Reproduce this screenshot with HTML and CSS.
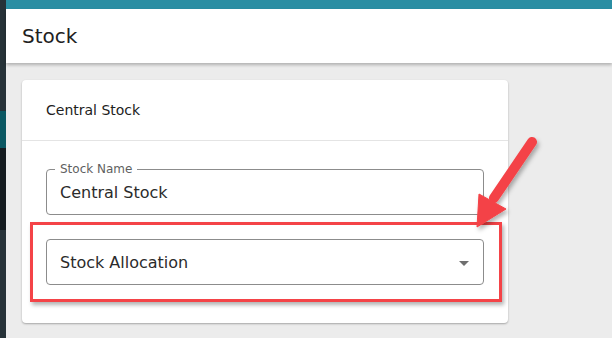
FILE: index.html
```html
<!DOCTYPE html>
<html>
<head>
  <title>Stock</title>
  <link rel="stylesheet" href="styles.css">
</head>
<body>
  <div class="app">
    <div class="sidebar">
      <div class="side-top"></div>
      <div class="side-active"></div>
      <div class="side-dark"></div>
      <div class="side-rest"></div>
    </div>

    <div class="main">
      <div class="topbar"></div>
      <div class="page-header">Stock</div>

      <div class="content">
        <div class="card">
          <div class="card-header">Central Stock</div>
          <div class="card-body">
            <div class="field">
              <span class="field-label">Stock Name</span>
              <div class="field-value">Central Stock</div>
            </div>

            <div class="field select">
              <div class="field-value">Stock Allocation</div>
              <span class="caret"></span>
              <div class="highlight"></div>
            </div>
          </div>
        </div>
      </div>
    </div>
  </div>

  <svg class="pointer" width="612" height="338" viewBox="0 0 612 338">
    <defs>
      <filter id="shade" x="-20%" y="-20%" width="160%" height="160%">
        <feDropShadow dx="2" dy="3" stdDeviation="2" flood-color="#000" flood-opacity="0.3"/>
      </filter>
    </defs>
    <g filter="url(#shade)" fill="#f44347" stroke="#f44347">
      <line x1="532" y1="142" x2="494" y2="198" stroke-width="10" stroke-linecap="round"/>
      <polygon points="477,227 479,194 506,209" stroke-width="1" stroke-linejoin="round"/>
    </g>
  </svg>
</body>
</html>
```

FILE: styles.css
```css
body {
  margin: 0;
  font-family: "DejaVu Sans", sans-serif;
  background-color: #ececec;
  color: #212121;
}

.app {
  display: flex;
  height: 338px;
  overflow: hidden;
}

.sidebar {
  width: 6px;
  display: flex;
  flex-direction: column;
  background-color: #263238;
}

.side-top {
  height: 111px;
}

.side-active {
  height: 37px;
  background-color: #0b5863;
}

.side-dark {
  height: 82px;
  background-color: #151b20;
}

.side-rest {
  flex: 1;
}

.main {
  flex: 1;
  display: flex;
  flex-direction: column;
}

.topbar {
  height: 9px;
  background-color: #2a8ea3;
}

.page-header {
  height: 54px;
  display: flex;
  align-items: center;
  padding-left: 16px;
  font-size: 20px;
  background-color: #fff;
  box-shadow: 0 2px 3px rgba(0, 0, 0, 0.25);
  position: relative;
}

.content {
  padding: 17px 0 0 16px;
}

.card {
  width: 486px;
  background-color: #fff;
  border-radius: 4px;
  box-shadow: 0 1px 2px rgba(0, 0, 0, 0.3);
}

.card-header {
  height: 60px;
  display: flex;
  align-items: center;
  padding-left: 24px;
  font-size: 14px;
  border-bottom: 1px solid #e4e4e4;
}

.card-body {
  padding: 28px 24px 38px 24px;
  display: flex;
  flex-direction: column;
  gap: 24px;
}

.field {
  position: relative;
  height: 46px;
  box-sizing: border-box;
  border: 1px solid #8c8c8c;
  border-radius: 4px;
  padding: 0 13px;
  display: flex;
  align-items: center;
}

.field-label {
  position: absolute;
  left: 8px;
  top: -8px;
  padding: 0 5px;
  font-size: 12px;
  line-height: 14px;
  color: #5f5f5f;
  background-color: #fff;
}

.field-value {
  font-size: 16px;
  color: #2b2b2b;
}

.caret {
  position: absolute;
  right: 14px;
  top: 21px;
  border-left: 5px solid transparent;
  border-right: 5px solid transparent;
  border-top: 5px solid #6f6f6f;
}

.highlight {
  position: absolute;
  left: -17px;
  right: -19px;
  top: -18px;
  bottom: -18px;
  border: 3px solid #f44347;
  box-shadow: 2px 3px 4px rgba(0, 0, 0, 0.3);
}

.pointer {
  position: absolute;
  left: 0;
  top: 0;
  pointer-events: none;
}
```
